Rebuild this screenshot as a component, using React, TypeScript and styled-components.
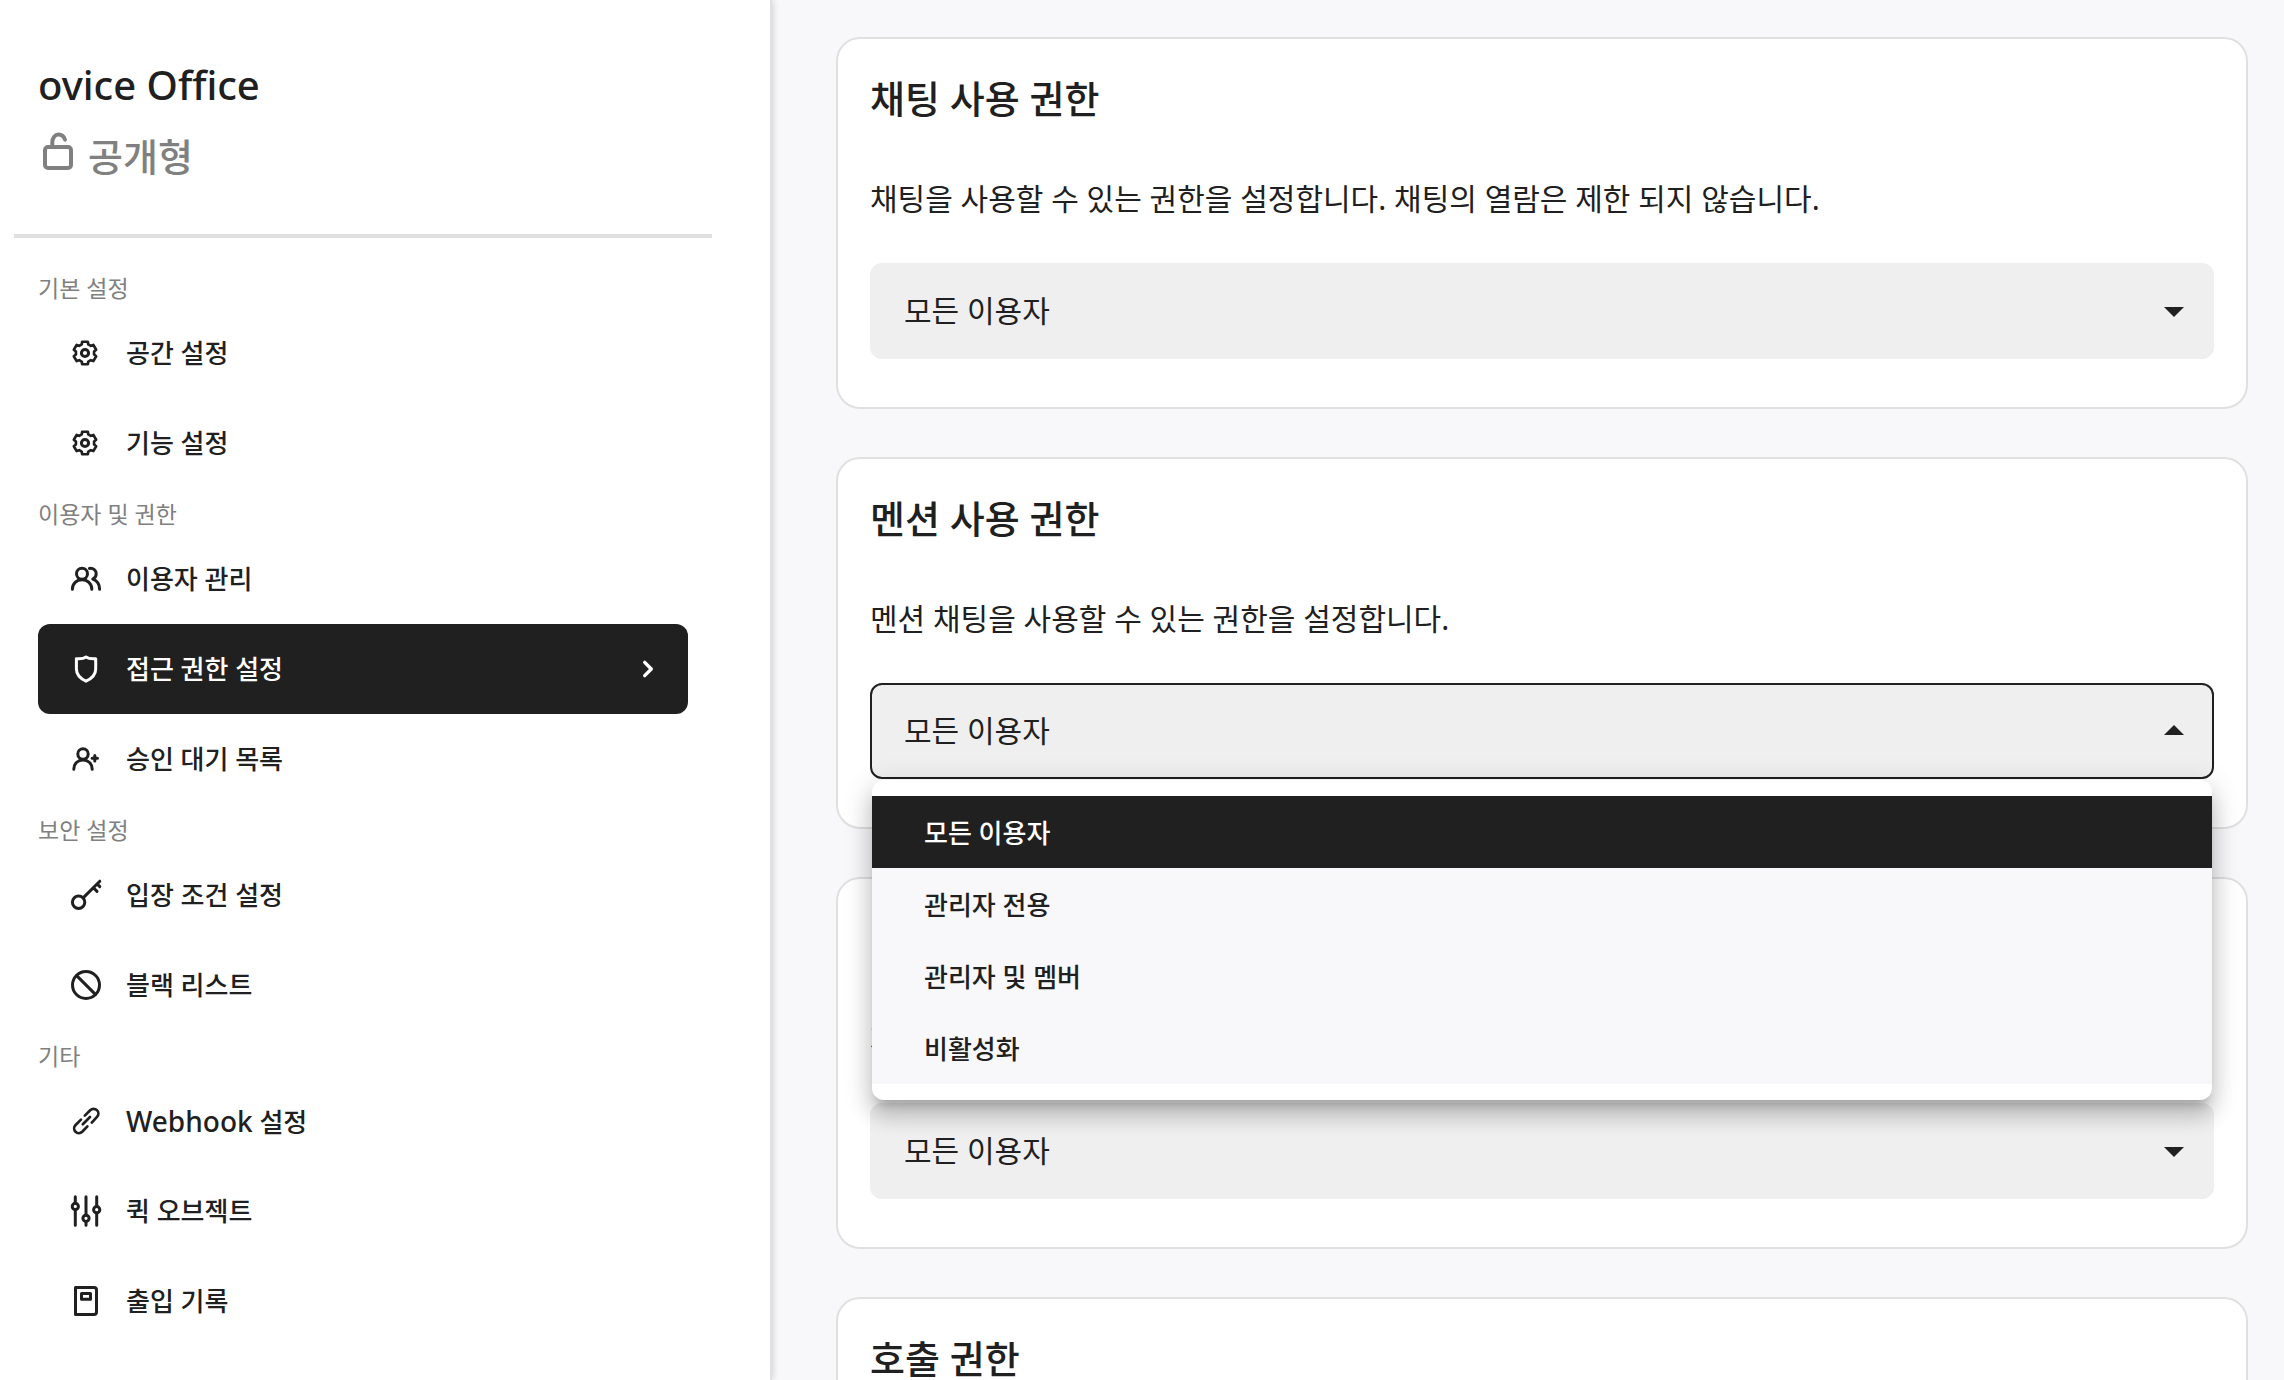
import React, { useId, useState } from "react";
import styled, { createGlobalStyle, css } from "styled-components";

const color = {
  ink: "#202020",
  muted: "#808080",
  line: "#e0e0e0",
  field: "#efefef",
  page: "#f8f8fa",
  white: "#ffffff",
};

const GlobalStyle = createGlobalStyle`
  *, *::before, *::after { box-sizing: border-box; }
  body {
    margin: 0;
    background: ${color.page};
    color: ${color.ink};
    font-family: "Noto Sans", "Noto Sans CJK KR", sans-serif;
  }
  h1, h2, h3, p, ul { margin: 0; padding: 0; }
  ul { list-style: none; }
`;

const Shell = styled.div`
  display: flex;
  height: 100vh;
  overflow: hidden;
`;

const Sidebar = styled.aside`
  flex: 0 0 772px;
  background: ${color.white};
  border-right: 2px solid ${color.line};
  box-shadow: 0 0 8px rgba(0, 0, 0, 0.2);
  z-index: 1;
`;

const SpaceHeader = styled.header`
  padding: 58px 38px 50px;
`;

const SpaceName = styled.h1`
  font-size: 40px;
  line-height: 54px;
  font-weight: 500;
`;

const SpaceType = styled.p`
  display: flex;
  align-items: center;
  gap: 10px;
  margin-top: 16px;
  color: ${color.muted};
  font-size: 38px;
  line-height: 56px;
  font-weight: 500;
`;

const Divider = styled.hr`
  margin: 0 58px 24px 14px;
  border: 0;
  border-top: 4px solid ${color.line};
`;

const Nav = styled.nav`
  padding: 0 82px 0 38px;
`;

const GroupLabel = styled.h3`
  padding: 8px 0 2px;
  color: ${color.muted};
  font-size: 23px;
  line-height: 36px;
  font-weight: 400;
`;

const NavLink = styled.a<{ $active?: boolean }>`
  display: flex;
  align-items: center;
  gap: 24px;
  height: 90px;
  padding: 0 24px 0 32px;
  border-radius: 12px;
  font-size: 26px;
  line-height: 40px;
  font-weight: 500;
  text-decoration: none;
  color: ${color.ink};
  ${(p) =>
    p.$active &&
    css`
      background: ${color.ink};
      color: ${color.white};
    `}
`;

const NavText = styled.span`
  flex: 1;
`;

const Latin = styled.span`
  font-size: 28px;
`;

const Icon = styled.svg`
  flex: none;
  width: 32px;
  height: 32px;
  fill: none;
  stroke: currentColor;
  stroke-width: 3;
  stroke-linecap: round;
  stroke-linejoin: round;
`;

const LockIcon = styled(Icon)`
  width: 40px;
  height: 40px;
  margin-bottom: 10px;
  stroke-width: 4;
`;

const Main = styled.main`
  flex: 1;
  min-width: 0;
  display: flex;
  flex-direction: column;
  gap: 48px;
  padding: 37px 36px 0 64px;
  overflow: hidden;
`;

const Card = styled.section`
  flex: none;
  padding: 32px 32px 48px;
  background: ${color.white};
  border: 2px solid ${color.line};
  border-radius: 24px;
`;

const CardTitle = styled.h2`
  font-size: 38px;
  line-height: 54px;
  font-weight: 500;
`;

const CardText = styled.label`
  display: block;
  margin: 50px 0 40px;
  font-size: 30px;
  line-height: 48px;
`;

const Field = styled.div`
  position: relative;
  display: grid;
  align-items: center;
`;

const Select = styled.select<{ $open: boolean }>`
  grid-area: 1 / 1;
  appearance: none;
  width: 100%;
  height: 96px;
  padding: 0 64px 2px 32px;
  border: 2px solid ${(p) => (p.$open ? color.ink : color.field)};
  border-radius: 12px;
  outline: none;
  background: ${color.field};
  color: ${color.ink};
  font-family: inherit;
  font-size: 30px;
  cursor: pointer;
`;

const Arrow = styled.svg<{ $open: boolean }>`
  grid-area: 1 / 1;
  justify-self: end;
  width: 48px;
  height: 48px;
  margin-right: 16px;
  fill: ${color.ink};
  pointer-events: none;
  transform: ${(p) => (p.$open ? "rotate(180deg)" : "none")};
`;

const Menu = styled.ul`
  position: absolute;
  z-index: 2;
  top: calc(100% + 1px);
  left: 2px;
  right: 2px;
  padding: 16px 0;
  background: ${color.white};
  border-radius: 12px;
  box-shadow:
    0 10px 10px -6px rgba(0, 0, 0, 0.2),
    0 16px 20px 2px rgba(0, 0, 0, 0.14),
    0 6px 28px 4px rgba(0, 0, 0, 0.12);
`;

const Option = styled.button<{ $selected: boolean }>`
  display: block;
  width: 100%;
  height: 72px;
  padding: 0 52px;
  border: 0;
  background: ${(p) => (p.$selected ? color.ink : color.page)};
  color: ${(p) => (p.$selected ? color.white : color.ink)};
  font-family: inherit;
  font-size: 26px;
  font-weight: 500;
  text-align: left;
  cursor: pointer;
`;

/* Six-toothed cog outline around the icon's centre. */
const cogPath = (() => {
  const points: string[] = [];
  for (let i = 0; i < 6; i++) {
    const mid = -90 + i * 60;
    for (const [offset, r] of [[-21, 9.2], [-14, 11.6], [14, 11.6], [21, 9.2]]) {
      const a = ((mid + offset) * Math.PI) / 180;
      points.push(`${(15 + r * Math.cos(a)).toFixed(2)} ${(16 + r * Math.sin(a)).toFixed(2)}`);
    }
  }
  return `M${points.join("L")}Z`;
})();

const icons: Record<string, React.ReactNode> = {
  cog: (
    <>
      <path d={cogPath} strokeWidth="2.7" />
      <circle cx="15" cy="16" r="3.6" />
    </>
  ),
  users: (
    <>
      <circle cx="12" cy="10.8" r="5.5" />
      <path d="M2.4 26.2C2.4 20.6 6.6 16.8 12 16.8S21.8 20.6 21.8 26.2" />
      <path d="M19.4 5.4C23.4 4.8 26.2 7.4 26.2 10.8C26.2 13.4 24.8 15.2 22.8 16.2C27 17.8 29.6 21.6 29.6 26.2" />
    </>
  ),
  shield: (
    <path d="M16 4C13.6 5.8 10 6 6.4 5.7V16C6.4 22 10.4 25.6 16 28.2C21.6 25.6 25.7 22 25.7 16V5.7C22 6 18.4 5.8 16 4Z" />
  ),
  userPlus: (
    <>
      <circle cx="13" cy="11" r="5.2" />
      <path d="M3.8 26.2C3.8 20.6 7.8 17 13 17S22.2 20.6 22.2 26.2" />
      <path d="M24.8 12.6V18M22.1 15.3H27.5" />
    </>
  ),
  key: (
    <>
      <circle cx="8.6" cy="23.3" r="6.2" />
      <path d="M13.4 18.6L29.8 2.2M23.4 8.8L27 12.4M27.2 5L29.8 7.6" />
    </>
  ),
  ban: (
    <>
      <circle cx="16" cy="16" r="13.5" />
      <path d="M6.6 6.6L25.4 25.4" />
    </>
  ),
  link: (
    <>
      <path d="M14.8 10.6L20.2 5.2A4.6 4.6 0 0 1 27 11.9L21.8 17.6" strokeWidth="2.7" />
      <path d="M11 14.6L5.6 20A4.6 4.6 0 0 0 12.2 26.8L17.4 21.4" strokeWidth="2.7" />
      <path d="M12.8 19.2L20 12" strokeWidth="2.7" />
    </>
  ),
  sliders: (
    <>
      <path d="M5.3 1.8V8.2M5.3 14.6V30.2M16 1.8V20M16 26.6V30.2M26.7 1.8V11.4M26.7 18V30.2" />
      <circle cx="5.3" cy="11.4" r="3.1" />
      <circle cx="16" cy="23.3" r="3.1" />
      <circle cx="26.7" cy="14.7" r="3.1" />
    </>
  ),
  log: (
    <>
      <path d="M5.5 2.5H24A2.5 2.5 0 0 1 26.5 5V27A2.5 2.5 0 0 1 24 29.5H5.5Z" />
      <path d="M11.5 8.5H20.5V14.2H11.5Z" />
    </>
  ),
};

type NavItem = { icon: string; text: string; latin?: string; active?: boolean };

const groups: { label: string; items: NavItem[] }[] = [
  {
    label: "기본 설정",
    items: [
      { icon: "cog", text: "공간 설정" },
      { icon: "cog", text: "기능 설정" },
    ],
  },
  {
    label: "이용자 및 권한",
    items: [
      { icon: "users", text: "이용자 관리" },
      { icon: "shield", text: "접근 권한 설정", active: true },
      { icon: "userPlus", text: "승인 대기 목록" },
    ],
  },
  {
    label: "보안 설정",
    items: [
      { icon: "key", text: "입장 조건 설정" },
      { icon: "ban", text: "블랙 리스트" },
    ],
  },
  {
    label: "기타",
    items: [
      { icon: "link", latin: "Webhook", text: " 설정" },
      { icon: "sliders", text: "퀵 오브젝트" },
      { icon: "log", text: "출입 기록" },
    ],
  },
];

const roles = ["모든 이용자", "관리자 전용", "관리자 및 멤버", "비활성화"];

const permissions = [
  {
    title: "채팅 사용 권한",
    text: "채팅을 사용할 수 있는 권한을 설정합니다. 채팅의 열람은 제한 되지 않습니다.",
  },
  { title: "멘션 사용 권한", text: "멘션 채팅을 사용할 수 있는 권한을 설정합니다." },
  { title: "이미지 공유 권한", text: "자료를 공유할 수 있는 권한을 설정합니다." },
  { title: "호출 권한", text: "호출을 사용할 수 있는 권한을 설정합니다." },
];

type PermissionProps = {
  title: string;
  text: string;
  open: boolean;
  onToggle: () => void;
};

function PermissionCard({ title, text, open, onToggle }: PermissionProps) {
  const id = useId();
  const [role, setRole] = useState(roles[0]);
  return (
    <Card>
      <CardTitle>{title}</CardTitle>
      <CardText htmlFor={id}>{text}</CardText>
      <Field>
        <Select
          id={id}
          $open={open}
          value={role}
          onChange={(e) => setRole(e.target.value)}
          onMouseDown={(e) => {
            e.preventDefault();
            onToggle();
          }}
        >
          {roles.map((r) => (
            <option key={r}>{r}</option>
          ))}
        </Select>
        <Arrow viewBox="0 0 24 24" $open={open} aria-hidden>
          <path d="M7 10l5 5 5-5z" />
        </Arrow>
        {open && (
          <Menu>
            {roles.map((r) => (
              <li key={r}>
                <Option
                  type="button"
                  $selected={r === role}
                  onClick={() => {
                    setRole(r);
                    onToggle();
                  }}
                >
                  {r}
                </Option>
              </li>
            ))}
          </Menu>
        )}
      </Field>
    </Card>
  );
}

export default function App() {
  const [openCard, setOpenCard] = useState(1);
  return (
    <>
      <GlobalStyle />
      <Shell>
        <Sidebar>
          <SpaceHeader>
            <SpaceName>ovice Office</SpaceName>
            <SpaceType>
              <LockIcon viewBox="0 0 40 40" aria-hidden>
                <rect x="7" y="16" width="26" height="21" rx="3" />
                <path d="M14.3 15.5V11.5C14.3 6.5 17 3.6 20.5 3.6C23.6 3.6 25.8 5.4 27 8.6" />
              </LockIcon>
              공개형
            </SpaceType>
          </SpaceHeader>
          <Divider />
          <Nav>
            {groups.map((group) => (
              <section key={group.label}>
                <GroupLabel>{group.label}</GroupLabel>
                <ul>
                  {group.items.map((item) => (
                    <li key={item.text}>
                      <NavLink
                        href="#"
                        $active={item.active}
                        aria-current={item.active ? "page" : undefined}
                      >
                        <Icon viewBox="0 0 32 32" aria-hidden>
                          {icons[item.icon]}
                        </Icon>
                        <NavText>
                          {item.latin && <Latin>{item.latin}</Latin>}
                          {item.text}
                        </NavText>
                        {item.active && (
                          <Icon viewBox="0 0 32 32" aria-hidden>
                            <path d="M12.7 9.4L19.3 16L12.7 22.6" strokeWidth="3.4" />
                          </Icon>
                        )}
                      </NavLink>
                    </li>
                  ))}
                </ul>
              </section>
            ))}
          </Nav>
        </Sidebar>
        <Main>
          {permissions.map((p, i) => (
            <PermissionCard
              key={p.title}
              title={p.title}
              text={p.text}
              open={openCard === i}
              onToggle={() => setOpenCard(openCard === i ? -1 : i)}
            />
          ))}
        </Main>
      </Shell>
    </>
  );
}
